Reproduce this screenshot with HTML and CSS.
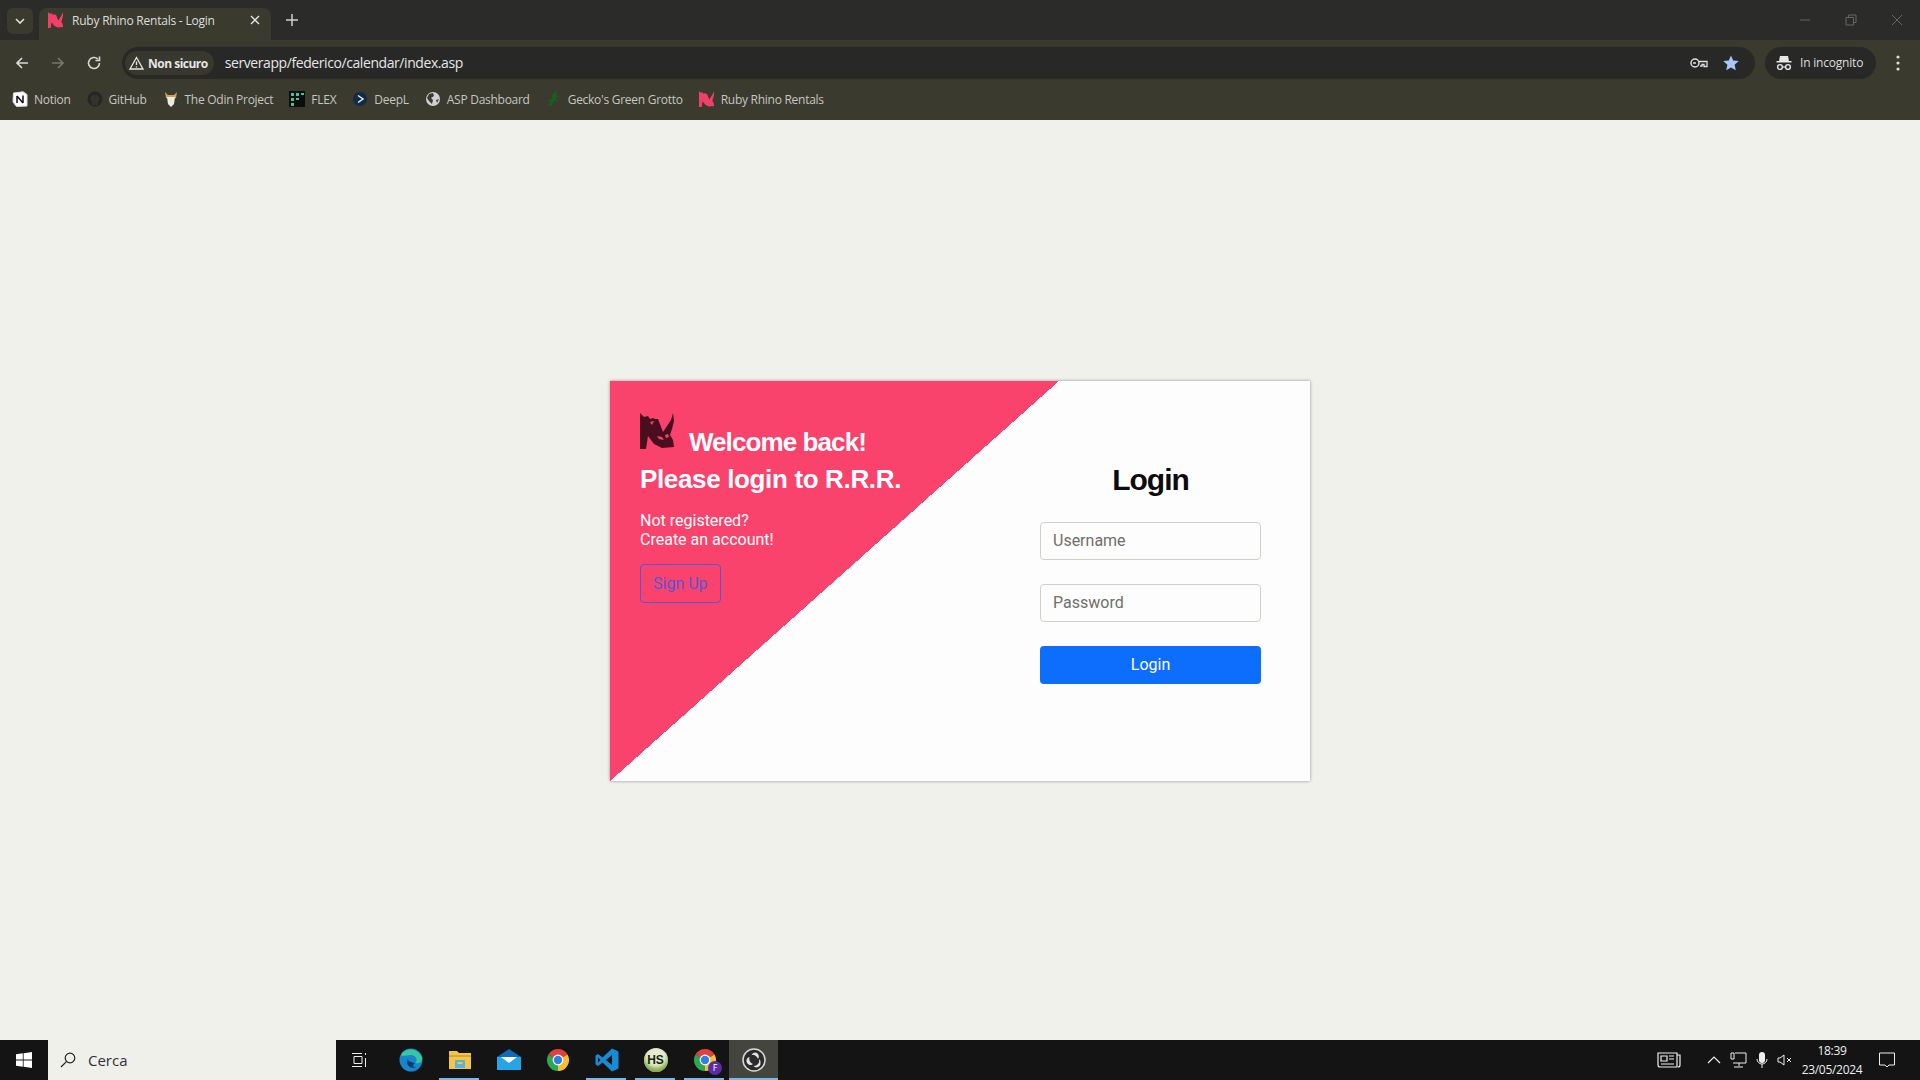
FILE: index.html
```html
<!DOCTYPE html>
<html lang="it">
<head>
    <meta charset="UTF-8">
    <title>Ruby Rhino Rentals - Login</title>
    <link rel="stylesheet" href="styles.css">
</head>
<body>
    <svg class="defs" width="0" height="0">
        <symbol id="rhino" viewBox="0 0 36 36">
            <path d="M0 0 L4 4 L8 3 L10 6 L13 5 L15 6 L18 6 L23 19 L27 13 L31 7 L33 0 L34 8 L32 16 L30 22 L33 27 L34 34 L22 35 L14 31 L8 23 L6 36 L0 36Z"/>
            <path fill="#f9426c" d="M10 9 L14 8 L12 12Z M17 23 L22 24 L24 27 L19 26Z M25 22 L28 21 L29 24 L26 25Z"/>
        </symbol>
        <symbol id="chrome" viewBox="0 0 24 24">
            <path fill="#e0413a" d="M12 12 L2.47 6.5 A11 11 0 0 1 21.53 6.5Z"/>
            <path fill="#f5c02c" d="M12 12 L21.53 6.5 A11 11 0 0 1 12 23Z"/>
            <path fill="#2ea750" d="M12 12 L12 23 A11 11 0 0 1 2.47 6.5Z"/>
            <circle cx="12" cy="12" r="5.4" fill="#fff"/>
            <circle cx="12" cy="12" r="4.2" fill="#2f7fe6"/>
        </symbol>
    </svg>

    <header class="browser">
        <div class="tabstrip">
            <div class="tab-search">
                <svg width="12" height="12" viewBox="0 0 12 12"><path d="M2 4 L6 8 L10 4" fill="none" stroke="#ddd" stroke-width="1.6"/></svg>
            </div>
            <div class="tab">
                <svg class="fav" width="16" height="16"><use href="#rhino"/></svg>
                <span class="tab-title">Ruby Rhino Rentals - Login</span>
                <svg width="12" height="12" viewBox="0 0 12 12"><path d="M2 2 L10 10 M10 2 L2 10" stroke="#e4e4e4" stroke-width="1.4"/></svg>
            </div>
            <svg class="new-tab" width="14" height="14" viewBox="0 0 14 14"><path d="M7 1 V13 M1 7 H13" stroke="#cfcfcf" stroke-width="1.5"/></svg>
            <div class="window-btns">
                <svg width="12" height="12" viewBox="0 0 12 12"><path d="M1 6 H11" stroke="#666" stroke-width="1"/></svg>
                <svg width="12" height="12" viewBox="0 0 12 12"><path d="M1 3.5 H8.5 V11 H1Z M3.5 3.5 V1 H11 V8.5 H8.5" fill="none" stroke="#666" stroke-width="1"/></svg>
                <svg width="12" height="12" viewBox="0 0 12 12"><path d="M1 1 L11 11 M11 1 L1 11" stroke="#666" stroke-width="1"/></svg>
            </div>
        </div>

        <div class="toolbar">
            <div class="nav-btns">
                <svg width="16" height="16" viewBox="0 0 16 16"><path d="M14 8 H3 M8 3 L3 8 L8 13" fill="none" stroke="#d8d8d8" stroke-width="1.7"/></svg>
                <svg width="16" height="16" viewBox="0 0 16 16"><path d="M2 8 H13 M8 3 L13 8 L8 13" fill="none" stroke="#77776c" stroke-width="1.7"/></svg>
                <svg width="16" height="16" viewBox="0 0 16 16"><path d="M13.5 8 A5.5 5.5 0 1 1 11.8 4 M13.5 1.5 V5.5 H9.5" fill="none" stroke="#d8d8d8" stroke-width="1.6"/></svg>
            </div>
            <div class="omnibox">
                <div class="chip">
                    <svg width="15" height="14" viewBox="0 0 15 14"><path d="M7.5 1.5 L14 13 H1Z M7.5 5.5 V9 M7.5 10.2 V11.6" fill="none" stroke="#e6e6e6" stroke-width="1.3"/></svg>
                    <span>Non sicuro</span>
                </div>
                <span class="url">serverapp/federico/calendar/index.asp</span>
                <div class="omni-icons">
                    <svg width="18" height="12" viewBox="0 0 18 12"><circle cx="5" cy="6" r="4" fill="none" stroke="#ddd" stroke-width="1.5"/><path d="M3 6 H6 M9 4.5 H17 V9.5 H14 V7.5 H12 V9 H10" fill="none" stroke="#ddd" stroke-width="1.3"/></svg>
                    <svg width="16" height="16" viewBox="0 0 16 16"><path d="M8 0.5 L10.2 5.6 L15.8 6.1 L11.6 9.8 L12.8 15.3 L8 12.5 L3.2 15.3 L4.4 9.8 L0.2 6.1 L5.8 5.6Z" fill="#a8c7fa"/></svg>
                </div>
            </div>
            <div class="incognito">
                <svg width="16" height="16" viewBox="0 0 16 16" fill="#e6e6e6"><path d="M4 1 H12 L13 6 H15.5 V7.5 H0.5 V6 H3Z"/><circle cx="4" cy="12" r="2.4" fill="none" stroke="#e6e6e6" stroke-width="1.4"/><circle cx="12" cy="12" r="2.4" fill="none" stroke="#e6e6e6" stroke-width="1.4"/><path d="M6.4 12 H9.6" stroke="#e6e6e6" stroke-width="1.2"/></svg>
                <span>In incognito</span>
            </div>
            <svg class="kebab" width="4" height="16" viewBox="0 0 4 16" fill="#dcdcdc"><circle cx="2" cy="2" r="1.6"/><circle cx="2" cy="8" r="1.6"/><circle cx="2" cy="14" r="1.6"/></svg>
        </div>

        <nav class="bookmarks">
            <a class="bm">
                <svg width="16" height="16" viewBox="0 0 16 16"><path d="M1.5 2 L11 0.8 L15 3.5 V15 L4.5 15.5 L1 11Z" fill="#fff" stroke="#ddd"/><path d="M5 5 V12 M5 5 L11 12 M11 4.5 V12" stroke="#111" stroke-width="1.5" fill="none"/></svg>
                <span>Notion</span>
            </a>
            <a class="bm">
                <svg width="16" height="16" viewBox="0 0 16 16"><circle cx="8" cy="8" r="7.5" fill="#262622"/><path d="M5 14 V11 C3 10 3 6 5 5 L6 3.5 L8 4.2 L10 3.5 L11 5 C13 6 13 10 11 11 V14" fill="#33332d"/></svg>
                <span>GitHub</span>
            </a>
            <a class="bm">
                <svg width="16" height="16" viewBox="0 0 16 16"><path d="M2 1 L5 4 H11 L14 1 L13 7 L8 9 L3 7Z" fill="#c9a258"/><path d="M4 6 H12 L11 13 L8 16 L5 13Z" fill="#ecebe2"/></svg>
                <span>The Odin Project</span>
            </a>
            <a class="bm">
                <svg width="16" height="16" viewBox="0 0 16 16"><rect width="16" height="16" fill="#0d0d0d"/><path d="M2 2 H5 V5 H2Z M7 2 H10 V5 H7Z M12 2 H15 V4 H12Z M2 7 H5 V10 H2Z M7 7 H10 V9 H7Z M2 12 H5 V15 H2Z" fill="#35c9a0"/></svg>
                <span>FLEX</span>
            </a>
            <a class="bm">
                <svg width="16" height="16" viewBox="0 0 16 16"><circle cx="8" cy="8" r="7" fill="#0f2b46"/><path d="M6 4.5 L11 8 L6 11.5" fill="none" stroke="#e8eef4" stroke-width="1.5"/></svg>
                <span>DeepL</span>
            </a>
            <a class="bm">
                <svg width="16" height="16" viewBox="0 0 16 16"><circle cx="8" cy="8" r="7" fill="#d0d0d0"/><path d="M4 3 L8 2 L9 5 L6 7 L8 9 L7 13 L4 10 L2 7Z M11 9 L14 8 L12 12Z" fill="#3a3a32"/></svg>
                <span>ASP Dashboard</span>
            </a>
            <a class="bm">
                <svg width="16" height="16" viewBox="0 0 16 16"><path d="M11 0 L10 4 L14 5 L10 7 L12 11 L8 10 L6 14 L2 16 L4 11 L1 9 L6 8 L6 3Z" fill="#1d5c1d"/></svg>
                <span>Gecko's Green Grotto</span>
            </a>
            <a class="bm">
                <svg class="fav" width="16" height="16"><use href="#rhino"/></svg>
                <span>Ruby Rhino Rentals</span>
            </a>
        </nav>
    </header>

    <main class="page">
        <section class="card">
            <div class="card-left">
                <h2 class="welcome">
                    <svg class="logo" width="36" height="36"><use href="#rhino"/></svg>
                    <span class="welcome-first">Welcome back!</span><br>Please login to R.R.R.
                </h2>
                <p class="signup-text">Not registered?<br>Create an account!</p>
                <a class="btn-signup">Sign Up</a>
            </div>
            <form class="card-right">
                <h2 class="login-title">Login</h2>
                <input class="field" type="text" placeholder="Username">
                <input class="field" type="password" placeholder="Password">
                <button class="btn-login" type="button">Login</button>
            </form>
        </section>
    </main>

    <footer class="taskbar">
        <div class="start">
            <svg width="16" height="16" viewBox="0 0 16 16" fill="#fff"><path d="M0 2.3 L6.8 1.3 V7.5 H0Z M7.6 1.2 L16 0 V7.5 H7.6Z M0 8.4 H6.8 V14.7 L0 13.7Z M7.6 8.4 H16 V16 L7.6 14.8Z"/></svg>
        </div>
        <div class="search">
            <svg width="16" height="16" viewBox="0 0 16 16"><circle cx="10" cy="6" r="4.8" fill="none" stroke="#222" stroke-width="1.2"/><path d="M6.4 9.6 L1 15" stroke="#222" stroke-width="1.2"/></svg>
            <span>Cerca</span>
        </div>
        <div class="task-view">
            <svg width="16" height="16" viewBox="0 0 16 16" fill="none" stroke="#eee"><path d="M0 1.5 H10 M0 14.5 H10 M2 4.5 H10 V11.5 H2Z M13.5 1 V3 M13.5 6 V15"/></svg>
        </div>
        <div class="apps">
            <div class="app">
                <svg width="24" height="24" viewBox="0 0 24 24"><circle cx="12" cy="12" r="11.5" fill="#1787c9"/><path d="M2 7 C5 0 18 -1 23 9 C24 14 20 16 16 15 C20 11 16 7 11 7 C7 7 4 9 2 7Z" fill="#37c6a0"/><path d="M16 15 C13 14 9 14 9 11 C6 15 10 21 17 20 C14 19 13 17 16 15Z" fill="#0b3d78"/></svg>
            </div>
            <div class="app underline">
                <svg width="22" height="20" viewBox="0 0 22 20"><path d="M0 1 H8 L10 3 H22 V19 H0Z" fill="#f2c649"/><rect x="0" y="5" width="22" height="2" fill="#d9a62e"/><path d="M6 10 H16 V18 H6Z" fill="#5fb0dc"/><rect x="8.5" y="12" width="5" height="2" fill="#f2c649"/></svg>
            </div>
            <div class="app">
                <svg width="24" height="22" viewBox="0 0 24 22"><path d="M12 0 L24 8 V21 H0 V8Z" fill="#0f6cbd"/><path d="M0 8 H24 V21 H0Z" fill="#26a5e4"/><path d="M4 8 H20 L12 14Z" fill="#fff"/></svg>
            </div>
            <div class="app">
                <svg width="24" height="24"><use href="#chrome"/></svg>
            </div>
            <div class="app underline">
                <svg width="24" height="24" viewBox="0 0 24 24"><path fill="#1a8ad4" fill-rule="evenodd" d="M17 0.5 L23.5 3.5 V20.5 L17 23.5 L7.5 14.5 L3 18 L0.5 16.5 V7.5 L3 6 L7.5 9.5Z M17 7 L11 12 L17 17Z M3 9.5 V14.5 L5.5 12Z"/></svg>
            </div>
            <div class="app underline">
                <div class="hs">HS</div>
            </div>
            <div class="app underline profile">
                <svg width="24" height="24"><use href="#chrome"/></svg>
                <span class="badge">F</span>
            </div>
            <div class="app underline active">
                <svg width="24" height="24" viewBox="0 0 24 24"><circle cx="12" cy="12" r="11" fill="#2b2b2b" stroke="#d8d8d8" stroke-width="1.5"/><path d="M13 4.5 A4 4 0 0 1 16 11 A5.5 5.5 0 0 0 9.5 7 A4 4 0 0 1 13 4.5Z M5 15 A4 4 0 0 1 7.5 9 A5.5 5.5 0 0 0 11 16 A4 4 0 0 1 5 15Z M18.5 15 A4 4 0 0 1 11.5 18 A5.5 5.5 0 0 0 17 11 A4 4 0 0 1 18.5 15Z" fill="#e4e4e4"/></svg>
            </div>
        </div>
        <div class="tray">
            <svg class="news" width="24" height="16" viewBox="0 0 24 16" fill="none" stroke="#eee"><path d="M1 1 H20 V15 H3 Q1 15 1 13Z M20 3 H23 V13 Q23 15 21 15 M4 4 H10 V9 H4Z M12 4 H17 M12 7 H17 M4 12 H17" stroke-width="1.2"/></svg>
            <svg width="14" height="8" viewBox="0 0 14 8" fill="none" stroke="#eee" stroke-width="1.2"><path d="M1 7 L7 1 L13 7"/></svg>
            <svg width="17" height="16" viewBox="0 0 17 16" fill="none" stroke="#eee"><path d="M5 1 H16 V11 H3 M1 1 H4 V7 H1Z M9 11 V14 M4 15 H13"/></svg>
            <svg width="12" height="17" viewBox="0 0 12 17"><rect x="3" y="0" width="6" height="11" rx="3" fill="#eee"/><path d="M1 7 A5 5 0 0 0 11 7 M6 12 V16" fill="none" stroke="#eee"/></svg>
            <svg width="15" height="12" viewBox="0 0 15 12" fill="none" stroke="#eee"><path d="M1 4 H3 L7 1 V11 L3 8 H1Z M10 4 L14 8 M14 4 L10 8"/></svg>
            <div class="clock">
                <span>18:39</span>
                <span>23/05/2024</span>
            </div>
            <svg class="notif" width="16" height="16" viewBox="0 0 16 16" fill="none" stroke="#eee"><path d="M0.5 1 H15.5 V13 H10 L8 15 L6 13 H0.5Z"/></svg>
        </div>
    </footer>
</body>
</html>
```

FILE: styles.css
```css
* {
    box-sizing: border-box;
}
html, body {
    height: 100%;
}
body {
    margin: 0;
    display: flex;
    flex-direction: column;
    overflow: hidden;
    background-color: #f1f1ec;
    font-family: 'Open Sans', 'Liberation Sans', sans-serif;
}
.defs {
    position: absolute;
}
svg {
    flex: none;
    display: block;
}
.fav {
    fill: #f0406a;
}

/* browser */
.browser {
    flex: none;
    height: 120px;
    background-color: #3a3a2e;
}
.tabstrip {
    height: 40px;
    display: flex;
    align-items: flex-end;
    background-color: #2b2b2a;
}
.tab-search {
    width: 26px;
    height: 26px;
    margin: 0 6px 6px 7px;
    border-radius: 6px;
    background-color: #3a3a2e;
    display: flex;
    align-items: center;
    justify-content: center;
}
.tab {
    width: 232px;
    height: 32px;
    padding: 0 10px 8px 9px;
    border-radius: 8px 8px 0 0;
    background-color: #3a3a2e;
    display: flex;
    align-items: center;
    color: #dedede;
    font-size: 12px;
}
.tab-title {
    flex: 1;
    margin-left: 8px;
    letter-spacing: -0.22px;
}
.new-tab {
    margin: 0 0 13px 14px;
}
.window-btns {
    margin-left: auto;
    height: 40px;
    padding-right: 17px;
    display: flex;
    align-items: center;
    gap: 34px;
}
.toolbar {
    height: 40px;
    display: flex;
    align-items: center;
    padding: 7px 0 1px 14px;
}
.nav-btns {
    display: flex;
    gap: 20px;
    margin-right: 20px;
}
.omnibox {
    width: 1633px;
    height: 32px;
    border-radius: 16px;
    background-color: #282826;
    display: flex;
    align-items: center;
    padding: 0 16px 0 3px;
}
.chip {
    height: 24px;
    padding: 0 6px 0 4px;
    border-radius: 12px;
    background-color: #38382f;
    display: flex;
    align-items: center;
    gap: 4px;
    color: #e6e6e6;
    font-size: 12px;
    font-weight: 700;
    letter-spacing: -0.5px;
}
.url {
    margin-left: 11px;
    padding-bottom: 2px;
    color: #e6e6e6;
    font-size: 14px;
    letter-spacing: -0.42px;
}
.omni-icons {
    margin-left: auto;
    display: flex;
    align-items: center;
    gap: 15px;
}
.incognito {
    width: 111px;
    height: 32px;
    margin-left: 10px;
    padding: 0 0 1px 11px;
    border-radius: 16px;
    background-color: #282826;
    display: flex;
    align-items: center;
    gap: 8px;
    color: #dedede;
    font-size: 12px;
    letter-spacing: -0.2px;
}
.kebab {
    margin-left: 20px;
}
.bookmarks {
    height: 40px;
    display: flex;
    align-items: center;
    gap: 16px;
    padding: 0 0 2px 12px;
}
.bm {
    display: flex;
    align-items: center;
    gap: 6px;
    color: #c6c6c2;
    font-size: 12px;
    letter-spacing: -0.27px;
}

/* login card */
.page {
    flex: 1;
    padding-top: 2px;
    display: flex;
    align-items: center;
    justify-content: center;
}
.card {
    width: 700px;
    height: 400px;
    display: flex;
    justify-content: space-between;
    background: linear-gradient(to bottom right, #f9426c 50%, transparent 50%) 0 0 / 449px 400px no-repeat, #fdfdfd;
    box-shadow: 0 0 3px rgba(60, 60, 90, 0.55);
}
.card-left {
    padding: 30px;
    color: #fff;
}
.welcome {
    margin: 2px 0 0;
    font-family: 'Liberation Sans', sans-serif;
    font-size: 26px;
    line-height: 37px;
    letter-spacing: -0.35px;
}
.welcome-first {
    letter-spacing: -0.9px;
}
.logo {
    display: inline-block;
    margin-right: 6px;
    vertical-align: 2px;
    fill: #4a0f1f;
}
.signup-text {
    margin: 13px 0 0;
    font-family: 'Roboto', sans-serif;
    font-size: 16px;
    line-height: 19px;
}
.btn-signup {
    display: inline-block;
    margin-top: 15px;
    padding: 9px 12px;
    border: 1px solid #5358dc;
    border-radius: 4px;
    color: #5358dc;
    font-family: 'Roboto', sans-serif;
    font-size: 16px;
    line-height: 19px;
}
.card-right {
    width: 221px;
    margin-right: 49px;
    padding-top: 79px;
    display: flex;
    flex-direction: column;
}
.login-title {
    margin: 0 0 23px;
    text-align: center;
    font-family: 'Liberation Sans', sans-serif;
    font-size: 30px;
    line-height: 39px;
    letter-spacing: -1px;
    color: #0c0c0c;
}
.field {
    height: 38px;
    margin-bottom: 24px;
    padding: 5px 12px 7px;
    border: 1px solid #d0d0c8;
    border-radius: 4px;
    background-color: #fdfdfd;
    font-family: 'Roboto', sans-serif;
    font-size: 16px;
}
.field::placeholder {
    color: #6f6f68;
}
.btn-login {
    height: 38px;
    padding: 0 0 2px;
    border: 0;
    border-radius: 4px;
    background-color: #0d6efd;
    color: #fff;
    font-family: 'Roboto', sans-serif;
    font-size: 16px;
}

/* taskbar */
.taskbar {
    flex: none;
    height: 40px;
    display: flex;
    background-color: #141414;
}
.start {
    width: 48px;
    display: flex;
    align-items: center;
    justify-content: center;
}
.search {
    width: 288px;
    display: flex;
    align-items: center;
    padding-left: 12px;
    gap: 12px;
    background-color: #f0f0ea;
    color: #30303a;
    font-size: 15px;
}
.task-view {
    width: 48px;
    display: flex;
    align-items: center;
    justify-content: center;
}
.apps {
    display: flex;
    margin-left: 2px;
}
.app {
    position: relative;
    width: 49px;
    display: flex;
    align-items: center;
    justify-content: center;
}
.underline::after {
    content: '';
    position: absolute;
    left: 4px;
    right: 5px;
    bottom: 0;
    height: 2px;
    background-color: #76b9ed;
}
.active {
    background-color: #45453f;
}
.active::after {
    left: 0;
    right: 0;
}
.hs {
    width: 24px;
    height: 24px;
    border-radius: 50%;
    background-color: #e6eccf;
    box-shadow: inset 0 -4px 4px #7aa83c;
    display: flex;
    align-items: center;
    justify-content: center;
    color: #16240f;
    font-family: 'Liberation Sans', sans-serif;
    font-size: 12px;
    font-weight: 700;
}
.badge {
    position: absolute;
    right: 7px;
    bottom: 5px;
    width: 14px;
    height: 14px;
    border-radius: 50%;
    background-color: #5a2ca8;
    color: #fff;
    font-size: 9px;
    line-height: 14px;
    text-align: center;
}
.tray {
    margin-left: auto;
    display: flex;
    align-items: center;
    padding-right: 25px;
    gap: 9px;
    color: #eee;
}
.news {
    margin-right: 17px;
}
.clock {
    width: 62px;
    display: flex;
    flex-direction: column;
    align-items: center;
    gap: 3px;
    font-size: 12px;
    line-height: 16px;
    letter-spacing: -0.3px;
}
.notif {
    margin-left: 7px;
}
```
